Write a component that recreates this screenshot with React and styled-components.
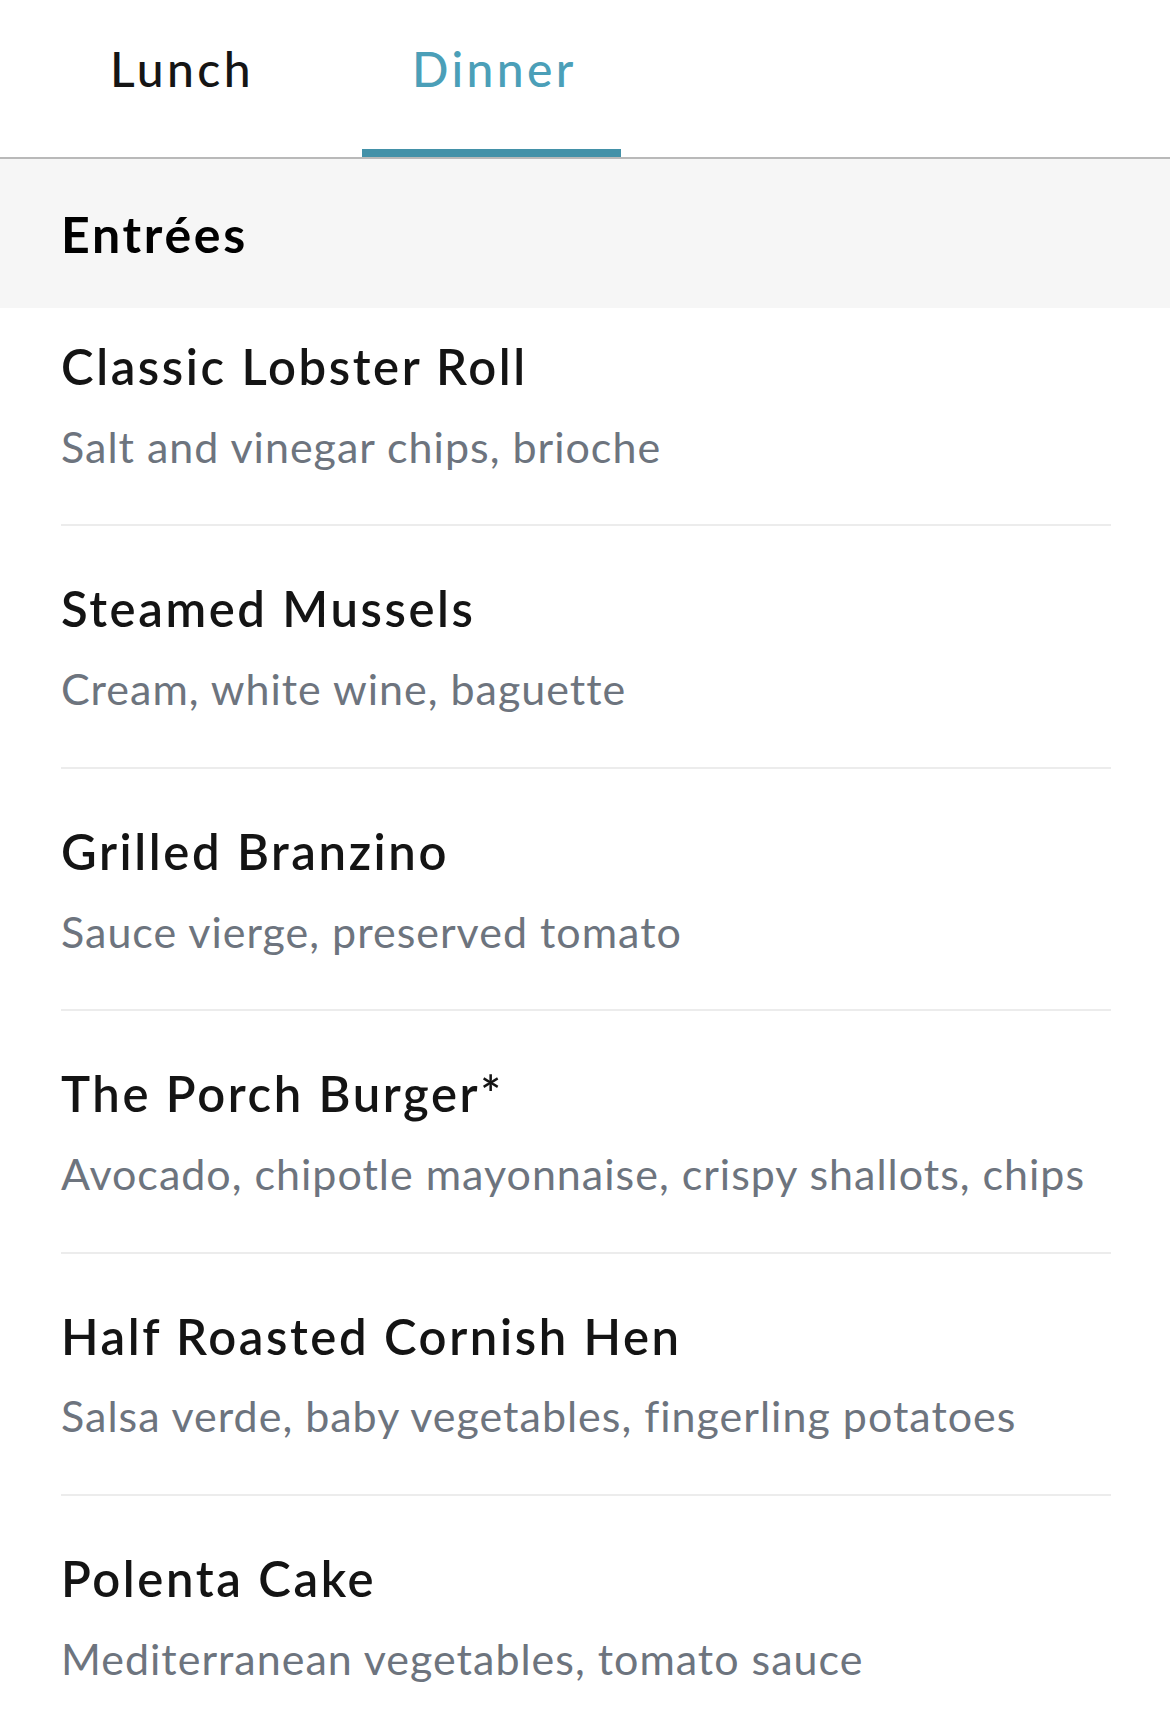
import React, { useState } from "react";
import styled, { createGlobalStyle } from "styled-components";

const Global = createGlobalStyle`
  html, body { margin: 0; padding: 0; background: #ffffff; }
  body { font-family: Lato, "Noto Sans", "Liberation Sans", sans-serif; -webkit-font-smoothing: antialiased; }
  * { box-sizing: border-box; }
`;

const Page = styled.div`
  width: 1170px;
  min-height: 1721px;
  background: #ffffff;
  overflow: hidden;
`;

const TabBar = styled.nav`
  display: flex;
  gap: 64px;
  padding-left: 60px;
  border-bottom: 2px solid #b9b9b9;
`;

const Tab = styled.button`
  all: unset;
  cursor: pointer;
  display: flex;
  align-items: flex-start;
  height: 157px;
  padding: 40px 44px 0 50px;
  box-sizing: border-box;
  font-family: Lato, "Noto Sans", sans-serif;
  font-size: 48px;
  line-height: 1.2;
  font-weight: 500;
  letter-spacing: 3.4px;
  color: ${(p) => (p.$active ? "#4b9fb8" : "#151515")};
  border-bottom: 8px solid ${(p) => (p.$active ? "#4391a8" : "transparent")};
`;

const SectionHeader = styled.h2`
  margin: 0;
  height: 149px;
  display: flex;
  align-items: center;
  padding-left: 61px;
  background: #f6f6f6;
  font-family: Lato, "Noto Sans", sans-serif;
  font-size: 50px;
  font-weight: 700;
  letter-spacing: 2.7px;
  color: #000000;
`;

const ItemList = styled.ul`
  list-style: none;
  margin: 0;
  padding: 0;
`;

const Item = styled.li`
  margin: 0 59px 0 61px;
  padding: 53px 0 52px;
  border-bottom: 2px solid #ececec;
  &:first-child { padding-top: 29px; }
`;

const Title = styled.div`
  font-size: 49px;
  line-height: 1.2;
  font-weight: 600;
  letter-spacing: 2.6px;
  color: #141414;
`;

const Description = styled.div`
  margin-top: 25px;
  font-size: 43px;
  line-height: 1.2;
  font-weight: 400;
  letter-spacing: 1px;
  color: #6d747e;
`;

const items = [
  ["Classic Lobster Roll", "Salt and vinegar chips, brioche"],
  ["Steamed Mussels", "Cream, white wine, baguette"],
  ["Grilled Branzino", "Sauce vierge, preserved tomato"],
  ["The Porch Burger*", "Avocado, chipotle mayonnaise, crispy shallots, chips"],
  ["Half Roasted Cornish Hen", "Salsa verde, baby vegetables, fingerling potatoes"],
  ["Polenta Cake", "Mediterranean vegetables, tomato sauce"],
];

export default function App() {
  const [tab, setTab] = useState("Dinner");
  return (
    <Page>
      <Global />
      <TabBar>
        {["Lunch", "Dinner"].map((t) => (
          <Tab key={t} $active={tab === t} onClick={() => setTab(t)}>
            {t}
          </Tab>
        ))}
      </TabBar>
      <SectionHeader>Entrées</SectionHeader>
      <ItemList>
        {items.map(([t, d]) => (
          <Item key={t}>
            <Title>{t}</Title>
            <Description>{d}</Description>
          </Item>
        ))}
      </ItemList>
    </Page>
  );
}
